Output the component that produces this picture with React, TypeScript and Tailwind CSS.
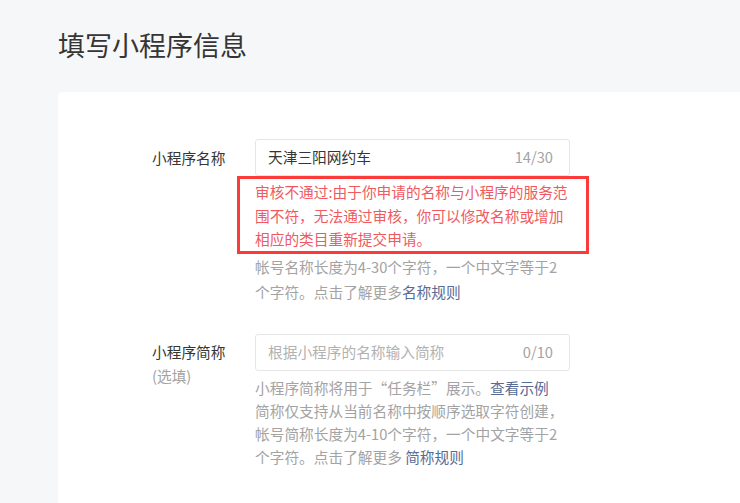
import React from "react"

function CountInput({ value, placeholder, count }: { value?: string; placeholder?: string; count: string }) {
  return (
    <div className="flex h-[37px] items-center justify-between rounded-[3px] border border-[#e6e6e6] bg-white pl-[12px] pr-[16px]">
      {value ? (
        <span className="text-[#353535]">{value}</span>
      ) : (
        <span className="text-[#b2b2b2]">{placeholder}</span>
      )}
      <span className="text-[#a3a3a3]">{count}</span>
    </div>
  )
}

export default function App() {
  return (
    <main className="flex h-screen flex-col overflow-hidden bg-[#f6f7f9] pl-[58px] pt-[25px] font-['Noto_Sans_CJK_SC',sans-serif] text-[14.7px]">
      {/* Page title */}
      <h1 className="text-[27px] leading-[40px] font-normal text-[#353535]">填写小程序信息</h1>

      {/* Form card */}
      <section className="mt-[27px] w-[800px] flex-1 rounded-tl-[4px] bg-white pl-[94px] pt-[47px]">
        {/* Name */}
        <div className="flex">
          <div className="w-[103px] pt-[6.5px] leading-[24px] text-[#353535]">小程序名称</div>
          <div className="w-[315px]">
            <CountInput value="天津三阳网约车" count="14/30" />
            <div className="-ml-[18px] w-[352px] border-[3px] border-[#fc3a3a] pl-[15px] pr-[16px] pt-[1px] leading-[23.5px] text-[#ef5a5f]">
              审核不通过:由于你申请的名称与小程序的服务范围不符，无法通过审核，你可以修改名称或增加相应的类目重新提交申请。
            </div>
            <p className="leading-[25px] text-[#a3a3a3]">
              帐号名称长度为4-30个字符，一个中文字等于2个字符。点击了解更多<a className="text-[#576b95]">名称规则</a>
            </p>
          </div>
        </div>

        {/* Short name */}
        <div className="mt-[30px] flex">
          <div className="w-[103px] pt-[6.5px] leading-[24px]">
            <div className="text-[#353535]">小程序简称</div>
            <div className="text-[#a3a3a3]">(选填)</div>
          </div>
          <div className="w-[315px]">
            <CountInput placeholder="根据小程序的名称输入简称" count="0/10" />
            <p className="mt-[5px] leading-[23.3px] text-[#a3a3a3]">
              小程序简称将用于“任务栏”展示。<a className="text-[#576b95]">查看示例</a>
              <br />
              简称仅支持从当前名称中按顺序选取字符创建，
              <br />
              帐号简称长度为4-10个字符，一个中文字等于2个字符。点击了解更多 <a className="text-[#576b95]">简称规则</a>
            </p>
          </div>
        </div>
      </section>
    </main>
  )
}
